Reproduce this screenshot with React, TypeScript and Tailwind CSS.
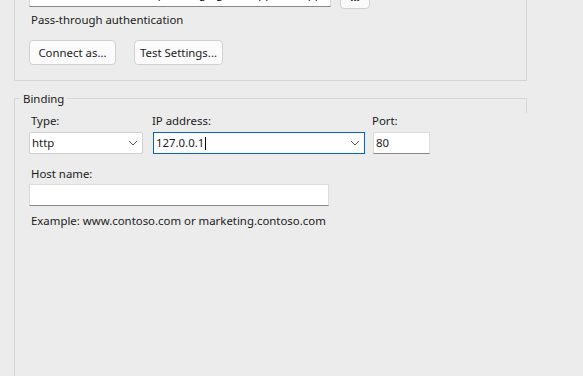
import React from "react";

const font = { fontFamily: '"Noto Sans", "Open Sans", sans-serif' };

function Chevron() {
  return (
    <svg width="10" height="6" viewBox="0 0 10 6" className="shrink-0">
      <path d="M1 1l4 4 4-4" fill="none" stroke="#5a5a5a" strokeWidth="1" />
    </svg>
  );
}

export default function App() {
  return (
    <div
      className="w-[583px] h-[376px] overflow-hidden bg-[#ececec] text-[11.4px] leading-[16px] text-[#1a1a1a]"
      style={font}
    >
      {/* physical path group, scrolled partly out of view */}
      <div className="-mt-[16px] ml-[14px] w-[513px] border-x border-b border-[#d6d6d6] pl-[14px] pb-[15px]">
        <div className="flex items-end gap-[9px]">
          <div className="w-[302px] h-[23px] bg-white border border-[#d2d2d2] border-b-[#868686] px-[3px] flex items-center overflow-hidden whitespace-nowrap">
            <span className="mt-[-3px]">
              C:\Users\admin\Desktop\Managing\WebApp\WebApp
            </span>
          </div>
          <button className="w-[30px] h-[23px] mb-[-2px] bg-[#fbfbfb] border border-[#d0d0d0] rounded-[4px] flex items-center justify-center overflow-hidden">
            <span className="mt-[-1px] font-bold">...</span>
          </button>
        </div>
        <div className="mt-[5px] ml-[2px]">Pass-through authentication</div>
        <div className="mt-[12px] flex gap-[18px]">
          <button className="w-[87px] h-[25px] bg-[#fbfbfb] border border-[#d0d0d0] rounded-[4px]">
            Connect as...
          </button>
          <button className="w-[89px] h-[25px] bg-[#fbfbfb] border border-[#d0d0d0] rounded-[4px]">
            Test Settings...
          </button>
        </div>
      </div>

      {/* Binding group */}
      <div className="relative mt-[17px] ml-[14px] w-[513px] h-[400px] border-l border-t border-[#d6d6d6] pl-[14px] pt-[14px]">
        <span className="absolute -top-[8px] left-[5px] px-[3px] bg-[#ececec]">
          Binding
        </span>
        <div className="absolute right-0 -top-px w-px h-[15px] bg-[#d6d6d6]" />

        <div className="flex gap-[10px]">
          <div className="w-[114px]">
            <div className="ml-[2px]">Type:</div>
            <div className="mt-[3px] h-[22px] bg-white border border-[#cfcfcf] rounded-[2px] flex items-center justify-between pl-[2px] pr-[4px]">
              <span>http</span>
              <Chevron />
            </div>
          </div>
          <div className="w-[212px]">
            <div className="-ml-[1px]">IP address:</div>
            <div className="mt-[3px] h-[22px] bg-white border border-[#0067c0] flex items-center justify-between pl-[2px] pr-[4px]">
              <span className="flex items-center">
                127.0.0.1
                <span className="ml-px w-px h-[13px] bg-black" />
              </span>
              <Chevron />
            </div>
          </div>
          <div className="w-[57px] ml-[-2px]">
            <div className="-ml-[1px]">Port:</div>
            <div className="mt-[3px] h-[22px] bg-white border border-[#dcdcdc] border-b-[#868686] flex items-center pl-[2px]">
              80
            </div>
          </div>
        </div>

        <div className="mt-[12px] ml-[2px]">Host name:</div>
        <div className="mt-[2px] w-[300px] h-[22px] bg-white border border-[#dcdcdc] border-b-[#868686]" />
        <div className="mt-[7px] ml-[2px]">
          Example: www.contoso.com or marketing.contoso.com
        </div>
      </div>
    </div>
  );
}
